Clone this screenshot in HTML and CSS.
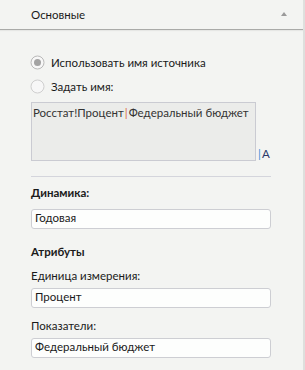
FILE: index.html
```html
<!DOCTYPE html>
<html lang="ru">
<head>
  <meta charset="UTF-8">
  <title>Основные</title>
  <link rel="stylesheet" href="styles.css">
</head>
<body>
  <div class="panel">
    <div class="panel-head">
      <span class="panel-title">Основные</span>
      <span class="collapse-arrow"></span>
    </div>
    <div class="panel-body">
      <div class="radio-row">
        <svg class="radio" width="15" height="15" viewBox="0 0 15 15">
          <circle cx="7.5" cy="7.5" r="6.5" fill="#f7f7f7" stroke="#b9b9b9"/>
          <circle cx="7.5" cy="7.5" r="3.5" fill="#a3a3a3"/>
        </svg>
        <span>Использовать имя источника</span>
      </div>
      <div class="radio-row">
        <svg class="radio" width="15" height="15" viewBox="0 0 15 15">
          <circle cx="7.5" cy="7.5" r="6.5" fill="#f7f7f7" stroke="#cfcfcf"/>
        </svg>
        <span>Задать имя:</span>
      </div>
      <div class="name-row">
        <div class="name-box">Росстат!Процент<span class="sep">|</span>Федеральный бюджет</div>
        <span class="format-btn"><span class="bar">|</span>A</span>
      </div>
      <div class="divider"></div>
      <div class="label bold">Динамика:</div>
      <div class="field first">Годовая</div>
      <div class="label bold group">Атрибуты</div>
      <div class="label">Единица измерения:</div>
      <div class="field">Процент</div>
      <div class="label next">Показатели:</div>
      <div class="field">Федеральный бюджет</div>
    </div>
  </div>
</body>
</html>
```

FILE: styles.css
```css
* {
  margin: 0;
  padding: 0;
  box-sizing: border-box;
}

body {
  font-family: Lato, 'Noto Sans', sans-serif;
  font-size: 11.5px;
  color: #1a1a1a;
  background: #f3f4f2;
}

.panel {
  width: 305px;
  height: 370px;
  border-right: 2px solid #dedfdd;
  background: #f3f4f2;
}

.panel-head {
  height: 30px;
  display: flex;
  align-items: center;
  justify-content: space-between;
  padding: 0 14px 1px 31px;
  border-bottom: 1px solid #a9aaa8;
  box-shadow: 0 1px 1px #e6e7e5;
}

.panel-title {
  color: #1a1a1a;
}

.collapse-arrow {
  width: 0;
  height: 0;
  border-left: 3px solid transparent;
  border-right: 3px solid transparent;
  border-bottom: 4px solid #9a9a9a;
  margin-right: 2px;
}

.panel-body {
  padding: 24px 32px 0 31px;
}

.radio-row {
  display: flex;
  align-items: center;
  height: 16px;
  margin-bottom: 8px;
}

.radio {
  margin-left: -1px;
  margin-right: 6px;
}

.name-row {
  display: flex;
  align-items: flex-end;
  margin-top: 1px;
}

.name-box {
  width: 225px;
  height: 59px;
  background: #ebecea;
  border: 1px solid #cacbd2;
  padding: 2px 1px;
  line-height: 16px;
  color: #333;
  white-space: nowrap;
  overflow: hidden;
}

.sep {
  color: #d96a3a;
  padding: 0 1px;
}

.format-btn {
  margin-left: 2px;
  font-size: 11.5px;
  line-height: 14px;
  color: #2a3a6a;
}

.bar {
  color: #3a8fd6;
  margin-right: 1px;
}

.divider {
  height: 1px;
  background: #d4d5dc;
  margin-top: 15px;
}

.label {
  line-height: 16px;
  color: #1a1a1a;
}

.bold {
  font-weight: bold;
  margin-top: 8px;
}

.group {
  margin-top: 15px;
}

.label + .label {
  margin-top: 8px;
}

.next {
  margin-top: 10px;
}

.field {
  height: 20px;
  background: #fdfefd;
  border: 1px solid #cdced3;
  border-radius: 3px;
  padding: 0 3px;
  line-height: 15px;
  margin-top: 4px;
  color: #1a1a1a;
}

.field.first {
  margin-top: 8px;
}
```
